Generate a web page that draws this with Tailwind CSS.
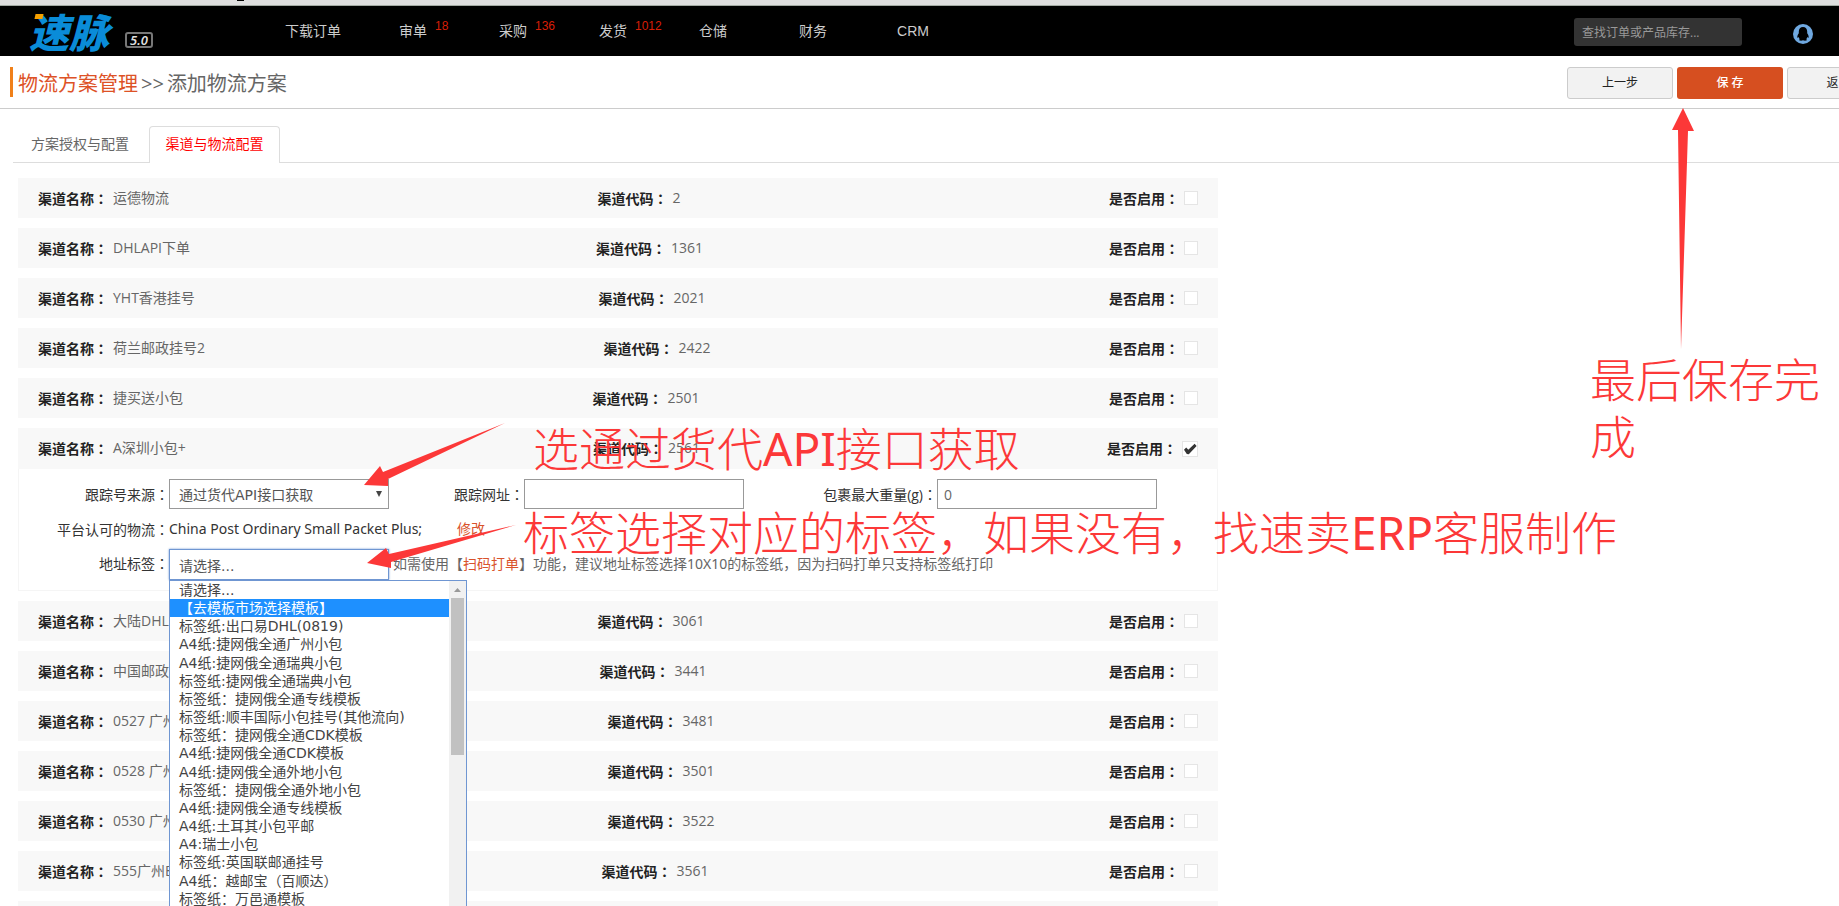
<!DOCTYPE html>
<html lang="zh-CN">
<head>
<meta charset="utf-8">
<title>添加物流方案</title>
<script src="https://cdn.jsdelivr.net/npm/@tailwindcss/browser@4"></script>
</head>
<body class="relative h-screen overflow-hidden bg-white font-['Open_Sans','Noto_Sans_CJK_SC',sans-serif] text-[14px] leading-5 text-[#666]">

<div class="h-[6px] border-b border-[#a3aaa3] bg-[#dedede]"><div class="ml-[237px] h-px w-[7px] bg-black"></div></div>

<header class="flex h-[50px] items-center bg-black pr-[26px]">
  <a href="#" class="relative flex w-[263px] shrink-0 items-end pl-[29px]" aria-label="速脉 5.0">
    <span class="font-['Noto_Sans_CJK_SC',sans-serif] text-[40px] leading-[40px] font-black text-[#0a8cd8] italic">速脉</span>
    <span class="absolute top-[3px] left-[35px] h-[5px] w-[8px] -skew-x-12 bg-[#f5a000]"></span>
    <span class="mb-[3px] ml-4 h-4 rounded-[3px] border-2 border-[#777] px-[3px] font-['Noto_Sans',sans-serif] text-[13px] leading-3 font-semibold text-[#ddd] italic">5.0</span>
  </a>
  <nav class="flex font-['Liberation_Sans','Noto_Sans_CJK_SC',sans-serif] text-[#ccc]">
    <a href="#" class="w-[100px] text-center">下载订单</a>
    <a href="#" class="w-[100px] text-center"><span class="relative">审单<sup class="absolute -top-[5px] left-full ml-2 text-[12px] leading-4 text-[#d81e06]">18</sup></span></a>
    <a href="#" class="w-[100px] text-center"><span class="relative">采购<sup class="absolute -top-[5px] left-full ml-2 text-[12px] leading-4 text-[#d81e06]">136</sup></span></a>
    <a href="#" class="w-[100px] text-center"><span class="relative">发货<sup class="absolute -top-[5px] left-full ml-2 text-[12px] leading-4 text-[#d81e06]">1012</sup></span></a>
    <a href="#" class="w-[100px] text-center">仓储</a>
    <a href="#" class="w-[100px] text-center">财务</a>
    <a href="#" class="w-[100px] text-center">CRM</a>
  </nav>
  <input type="text" aria-label="查找" placeholder="查找订单或产品库存..." class="mt-[2px] ml-auto h-7 w-[168px] rounded-[3px] bg-[#333] px-2 text-[12px] placeholder:text-[#999]">
  <a href="#" aria-label="QQ" class="ml-[51px]">
    <svg class="mt-[5px] size-5" viewBox="0 0 20 20"><ellipse cx="10" cy="10" rx="10" ry="10" fill="#6fa8e0"/><path d="M10 3c-2.6 0-4.200 1.900-4.200 4.600v1.600C4.800 10.600 4.200 12 4.300 13.400c.1.700.7.500 1.300-.3.200.9.700 1.600 1.300 2.100-.6.200-.9.500-.8.900.3.700 2.900.7 3.900.1 1 .6 3.600.6 3.900-.1.100-.4-.2-.7-.8-.9.600-.5 1.100-1.200 1.300-2.100.6.800 1.200 1 1.300.3.100-1.400-.5-2.800-1.500-4.200V7.600C14.200 4.900 12.600 3 10 3z" fill="#000"/></svg>
  </a>
</header>

<div class="flex h-[53px] items-start border-b border-[#ccc] pt-[11px] pl-[10px]">
  <h1 class="flex h-[30px] items-center border-l-3 border-[#f08019] pt-[3px] pl-[5px] text-[20px] leading-[30px]"><a href="#" class="text-[#dd5226]">物流方案管理</a><span class="px-[3px]">&gt;&gt;</span>添加物流方案</h1>
  <div class="-mr-[54px] ml-auto flex gap-1 text-[12px]">
    <button class="h-8 w-[106px] rounded-[3px] border border-[#ccc] bg-[#f2f2f2] text-[#222]">上一步</button>
    <button class="h-8 w-[106px] rounded-[3px] bg-[#d64f20] font-medium text-white">保 存</button>
    <button class="h-8 w-[106px] rounded-[3px] border border-[#ccc] bg-[#f2f2f2] text-[#222]">返 回</button>
  </div>
</div>

<div class="mt-[17px] ml-[13px] flex h-[37px] border-b border-[#ddd]">
  <button class="w-[136px] pl-[18px] text-left">方案授权与配置</button>
  <button class="h-[37px] w-[131px] rounded-t-[4px] border border-b-0 border-[#ddd] bg-white pb-[2px] text-[#f00]">渠道与物流配置</button>
</div>

<main class="mt-[15px] ml-[18px] flex max-w-[1200px] flex-col gap-[10px]">
  <section class="flex h-10 shrink-0 items-center justify-between bg-[#f8f8f8] px-5">
    <p class="flex gap-[5px]"><b class="text-[#222]">渠道名称<span class="font-['Noto_Sans_CJK_TC']" lang="zh-TW">：</span></b>运德物流</p>
    <p class="flex gap-[5px]"><b class="text-[#222]">渠道代码<span class="font-['Noto_Sans_CJK_TC']" lang="zh-TW">：</span></b>2</p>
    <label class="flex items-center gap-[5px]"><b class="text-[#222]">是否启用<span class="font-['Noto_Sans_CJK_TC']" lang="zh-TW">：</span></b><input type="checkbox" class="size-[14px] appearance-none border border-[#e5e5e5] bg-white"></label>
  </section>
  <section class="flex h-10 shrink-0 items-center justify-between bg-[#f8f8f8] px-5">
    <p class="flex gap-[5px]"><b class="text-[#222]">渠道名称<span class="font-['Noto_Sans_CJK_TC']" lang="zh-TW">：</span></b>DHLAPI下单</p>
    <p class="flex gap-[5px]"><b class="text-[#222]">渠道代码<span class="font-['Noto_Sans_CJK_TC']" lang="zh-TW">：</span></b>1361</p>
    <label class="flex items-center gap-[5px]"><b class="text-[#222]">是否启用<span class="font-['Noto_Sans_CJK_TC']" lang="zh-TW">：</span></b><input type="checkbox" class="size-[14px] appearance-none border border-[#e5e5e5] bg-white"></label>
  </section>
  <section class="flex h-10 shrink-0 items-center justify-between bg-[#f8f8f8] px-5">
    <p class="flex gap-[5px]"><b class="text-[#222]">渠道名称<span class="font-['Noto_Sans_CJK_TC']" lang="zh-TW">：</span></b>YHT香港挂号</p>
    <p class="flex gap-[5px]"><b class="text-[#222]">渠道代码<span class="font-['Noto_Sans_CJK_TC']" lang="zh-TW">：</span></b>2021</p>
    <label class="flex items-center gap-[5px]"><b class="text-[#222]">是否启用<span class="font-['Noto_Sans_CJK_TC']" lang="zh-TW">：</span></b><input type="checkbox" class="size-[14px] appearance-none border border-[#e5e5e5] bg-white"></label>
  </section>
  <section class="flex h-10 shrink-0 items-center justify-between bg-[#f8f8f8] px-5">
    <p class="flex gap-[5px]"><b class="text-[#222]">渠道名称<span class="font-['Noto_Sans_CJK_TC']" lang="zh-TW">：</span></b>荷兰邮政挂号2</p>
    <p class="flex gap-[5px]"><b class="text-[#222]">渠道代码<span class="font-['Noto_Sans_CJK_TC']" lang="zh-TW">：</span></b>2422</p>
    <label class="flex items-center gap-[5px]"><b class="text-[#222]">是否启用<span class="font-['Noto_Sans_CJK_TC']" lang="zh-TW">：</span></b><input type="checkbox" class="size-[14px] appearance-none border border-[#e5e5e5] bg-white"></label>
  </section>
  <section class="flex h-10 shrink-0 items-center justify-between bg-[#f8f8f8] px-5">
    <p class="flex gap-[5px]"><b class="text-[#222]">渠道名称<span class="font-['Noto_Sans_CJK_TC']" lang="zh-TW">：</span></b>捷买送小包</p>
    <p class="flex gap-[5px]"><b class="text-[#222]">渠道代码<span class="font-['Noto_Sans_CJK_TC']" lang="zh-TW">：</span></b>2501</p>
    <label class="flex items-center gap-[5px]"><b class="text-[#222]">是否启用<span class="font-['Noto_Sans_CJK_TC']" lang="zh-TW">：</span></b><input type="checkbox" class="size-[14px] appearance-none border border-[#e5e5e5] bg-white"></label>
  </section>

  <div>
    <section class="flex h-[41px] items-center justify-between bg-[#f8f8f8] px-5">
      <p class="flex gap-[5px]"><b class="text-[#222]">渠道名称<span class="font-['Noto_Sans_CJK_TC']" lang="zh-TW">：</span></b>A深圳小包+</p>
      <p class="flex gap-[5px]"><b class="text-[#222]">渠道代码<span class="font-['Noto_Sans_CJK_TC']" lang="zh-TW">：</span></b>2561</p>
      <label class="flex items-center gap-[5px]"><b class="text-[#222]">是否启用<span class="font-['Noto_Sans_CJK_TC']" lang="zh-TW">：</span></b><span class="relative flex"><input type="checkbox" checked class="size-4 appearance-none border border-[#e5e5e5] bg-white"><svg class="pointer-events-none absolute inset-0 size-4" viewBox="0 0 16 16"><path d="M2 8.800 4.200 6.500 6.300 8.700 12.600 2.800 14.600 4.900 6.800 13.200 4.800 13z" fill="#333"/></svg></span></label>
    </section>
    <form class="flex h-[122px] flex-col border border-t-0 border-[#f5f5f5] pt-[10px] text-[#333]">
      <div class="flex h-[30px] items-center">
        <label for="source" class="w-[150px] shrink-0 text-right">跟踪号来源<span class="font-['Noto_Sans_CJK_TC']" lang="zh-TW">：</span></label>
        <div class="relative">
          <select id="source" class="h-[30px] w-[220px] appearance-none border border-[#999] bg-white pt-[2px] pl-[9px] font-['DejaVu_Sans','Noto_Sans_CJK_SC',sans-serif] text-[#555]"><option>通过货代API接口获取</option></select>
          <svg class="pointer-events-none absolute top-3 right-[7px] h-[6px] w-[6px]" viewBox="0 0 6 6"><path d="M0 0h6L3 6z" fill="#444"/></svg>
        </div>
        <label for="url" class="ml-[65px] w-[70px] shrink-0">跟踪网址<span class="font-['Noto_Sans_CJK_TC']" lang="zh-TW">：</span></label>
        <input id="url" type="text" class="h-[30px] w-[220px] border border-[#999] px-[6px]">
        <label for="weight" class="w-[193px] shrink-0 text-right">包裹最大重量(g)<span class="font-['Noto_Sans_CJK_TC']" lang="zh-TW">：</span></label>
        <input id="weight" type="text" value="0" class="h-[30px] w-[220px] border border-[#999] px-[6px] text-[#666]">
      </div>
      <div class="flex h-10 items-center">
        <span class="w-[150px] shrink-0 text-right">平台认可的物流<span class="font-['Noto_Sans_CJK_TC']" lang="zh-TW">：</span></span>
        <span class="w-[288px] font-['Noto_Sans','Noto_Sans_CJK_SC',sans-serif]">China Post Ordinary Small Packet Plus;</span>
        <a href="#" class="text-[#d9532c]">修改</a>
      </div>
      <div class="flex h-[31px] items-center">
        <label for="tag" class="w-[150px] shrink-0 pb-[2px] text-right">地址标签<span class="font-['Noto_Sans_CJK_TC']" lang="zh-TW">：</span></label>
        <div class="relative">
          <select id="tag" class="block h-[31px] w-[220px] appearance-none border border-[#6f96d2] bg-white pt-[2px] pl-[9px] font-['DejaVu_Sans','Noto_Sans_CJK_SC',sans-serif] text-[#555] shadow-[0_0_2px_#6f96d2]"><option>请选择...</option></select>
          <div class="absolute top-full left-0 z-10 flex h-[329px] w-[298px] border border-[#6f96d2] bg-white font-['DejaVu_Sans','Noto_Sans_CJK_SC',sans-serif] text-[#444]">
            <ul role="listbox" aria-label="地址标签" class="grid flex-1 grid-rows-[repeat(18,minmax(0,1fr))] leading-[18px] whitespace-nowrap *:pl-[9px]">
              <li role="option">请选择...</li>
              <li role="option" aria-selected="true" class="bg-[#1e90ff] text-white">【去模板市场选择模板】</li>
              <li role="option">标签纸:出口易DHL(0819)</li>
              <li role="option">A4纸:捷网俄全通广州小包</li>
              <li role="option">A4纸:捷网俄全通瑞典小包</li>
              <li role="option">标签纸:捷网俄全通瑞典小包</li>
              <li role="option">标签纸：捷网俄全通专线模板</li>
              <li role="option">标签纸:顺丰国际小包挂号(其他流向)</li>
              <li role="option">标签纸：捷网俄全通CDK模板</li>
              <li role="option">A4纸:捷网俄全通CDK模板</li>
              <li role="option">A4纸:捷网俄全通外地小包</li>
              <li role="option">标签纸：捷网俄全通外地小包</li>
              <li role="option">A4纸:捷网俄全通专线模板</li>
              <li role="option">A4纸:土耳其小包平邮</li>
              <li role="option">A4:瑞士小包</li>
              <li role="option">标签纸:英国联邮通挂号</li>
              <li role="option">A4纸：越邮宝（百顺达）</li>
              <li role="option">标签纸：万邑通模板</li>
            </ul>
            <div class="flex w-[17px] flex-col items-center bg-[#f1f1f1]">
              <svg class="h-[17px] w-[7px]" viewBox="0 0 7 17"><path d="M0 11h7L3.500 7z" fill="#999"/></svg>
              <div class="h-[157px] w-[13px] bg-[#c1c1c1]"></div>
            </div>
          </div>
        </div>
        <p class="pb-[2px] pl-1 font-['Noto_Sans','Noto_Sans_CJK_SC',sans-serif] whitespace-nowrap text-[#666]">如需使用【<a href="#" class="text-[#d9532c]">扫码打单</a>】功能，建议地址标签选择10X10的标签纸，因为扫码打单只支持标签纸打印</p>
      </div>
    </form>
  </div>

  <section class="flex h-10 shrink-0 items-center justify-between bg-[#f8f8f8] px-5">
    <p class="flex gap-[5px]"><b class="text-[#222]">渠道名称<span class="font-['Noto_Sans_CJK_TC']" lang="zh-TW">：</span></b><span class="w-20">大陆DHL</span></p>
    <p class="flex gap-[5px]"><b class="text-[#222]">渠道代码<span class="font-['Noto_Sans_CJK_TC']" lang="zh-TW">：</span></b>3061</p>
    <label class="flex items-center gap-[5px]"><b class="text-[#222]">是否启用<span class="font-['Noto_Sans_CJK_TC']" lang="zh-TW">：</span></b><input type="checkbox" class="size-[14px] appearance-none border border-[#e5e5e5] bg-white"></label>
  </section>
  <section class="flex h-10 shrink-0 items-center justify-between bg-[#f8f8f8] px-5">
    <p class="flex gap-[5px]"><b class="text-[#222]">渠道名称<span class="font-['Noto_Sans_CJK_TC']" lang="zh-TW">：</span></b><span class="w-[84px]">中国邮政</span></p>
    <p class="flex gap-[5px]"><b class="text-[#222]">渠道代码<span class="font-['Noto_Sans_CJK_TC']" lang="zh-TW">：</span></b>3441</p>
    <label class="flex items-center gap-[5px]"><b class="text-[#222]">是否启用<span class="font-['Noto_Sans_CJK_TC']" lang="zh-TW">：</span></b><input type="checkbox" class="size-[14px] appearance-none border border-[#e5e5e5] bg-white"></label>
  </section>
  <section class="flex h-10 shrink-0 items-center justify-between bg-[#f8f8f8] px-5">
    <p class="flex gap-[5px]"><b class="text-[#222]">渠道名称<span class="font-['Noto_Sans_CJK_TC']" lang="zh-TW">：</span></b><span class="w-[100px]">0527 广州</span></p>
    <p class="flex gap-[5px]"><b class="text-[#222]">渠道代码<span class="font-['Noto_Sans_CJK_TC']" lang="zh-TW">：</span></b>3481</p>
    <label class="flex items-center gap-[5px]"><b class="text-[#222]">是否启用<span class="font-['Noto_Sans_CJK_TC']" lang="zh-TW">：</span></b><input type="checkbox" class="size-[14px] appearance-none border border-[#e5e5e5] bg-white"></label>
  </section>
  <section class="flex h-10 shrink-0 items-center justify-between bg-[#f8f8f8] px-5">
    <p class="flex gap-[5px]"><b class="text-[#222]">渠道名称<span class="font-['Noto_Sans_CJK_TC']" lang="zh-TW">：</span></b><span class="w-[100px]">0528 广州</span></p>
    <p class="flex gap-[5px]"><b class="text-[#222]">渠道代码<span class="font-['Noto_Sans_CJK_TC']" lang="zh-TW">：</span></b>3501</p>
    <label class="flex items-center gap-[5px]"><b class="text-[#222]">是否启用<span class="font-['Noto_Sans_CJK_TC']" lang="zh-TW">：</span></b><input type="checkbox" class="size-[14px] appearance-none border border-[#e5e5e5] bg-white"></label>
  </section>
  <section class="flex h-10 shrink-0 items-center justify-between bg-[#f8f8f8] px-5">
    <p class="flex gap-[5px]"><b class="text-[#222]">渠道名称<span class="font-['Noto_Sans_CJK_TC']" lang="zh-TW">：</span></b><span class="w-[100px]">0530 广州</span></p>
    <p class="flex gap-[5px]"><b class="text-[#222]">渠道代码<span class="font-['Noto_Sans_CJK_TC']" lang="zh-TW">：</span></b>3522</p>
    <label class="flex items-center gap-[5px]"><b class="text-[#222]">是否启用<span class="font-['Noto_Sans_CJK_TC']" lang="zh-TW">：</span></b><input type="checkbox" class="size-[14px] appearance-none border border-[#e5e5e5] bg-white"></label>
  </section>
  <section class="flex h-10 shrink-0 items-center justify-between bg-[#f8f8f8] px-5">
    <p class="flex gap-[5px]"><b class="text-[#222]">渠道名称<span class="font-['Noto_Sans_CJK_TC']" lang="zh-TW">：</span></b><span class="w-[88px]">555广州E</span></p>
    <p class="flex gap-[5px]"><b class="text-[#222]">渠道代码<span class="font-['Noto_Sans_CJK_TC']" lang="zh-TW">：</span></b>3561</p>
    <label class="flex items-center gap-[5px]"><b class="text-[#222]">是否启用<span class="font-['Noto_Sans_CJK_TC']" lang="zh-TW">：</span></b><input type="checkbox" class="size-[14px] appearance-none border border-[#e5e5e5] bg-white"></label>
  </section>
  <section class="h-10 shrink-0 bg-[#f8f8f8]"></section>
</main>

<!-- Red callouts drawn over the page -->
<div class="pointer-events-none absolute inset-0 z-20 font-['Noto_Sans','Noto_Sans_CJK_SC',sans-serif] text-[46px] leading-[57px] font-light text-[#fc3838]">
  <svg class="absolute top-0 left-0 h-[906px] w-[1839px]" viewBox="0 0 1839 906" fill="#fc3838">
    <path d="M364 485 380 466 383 472 505 423 388 479 388 486z"/>
    <path d="M367 563 386 548 389 554 516 525 391 562 391 568z"/>
    <path d="M1683 108 1694 131 1688 131 1681 349 1678 130 1672 130z"/>
  </svg>
  <p class="absolute top-[420px] left-[533px] whitespace-nowrap">选通过货代<span class="font-normal">API</span>接口获取</p>
  <p class="absolute top-[504px] left-[523px] whitespace-nowrap">标签选择对应的标签，如果没有，找速卖<span class="font-normal">ERP</span>客服制作</p>
  <p class="absolute top-[351px] left-[1590px] w-[240px]">最后保存完成</p>
</div>
</body>
</html>
